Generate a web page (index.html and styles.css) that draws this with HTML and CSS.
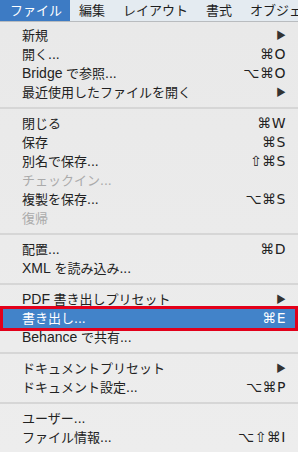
FILE: index.html
```html
<!DOCTYPE html>
<html lang="ja">
<head>
    <meta charset="UTF-8">
    <title>ファイル メニュー</title>
    <link rel="stylesheet" href="styles.css">
</head>
<body>
<div id="menubar">
    <span class="barItem active">ファイル</span>
    <span class="barItem">編集</span>
    <span class="barItem">レイアウト</span>
    <span class="barItem">書式</span>
    <span class="barItem last">オブジェクト</span>
</div>
<div id="menu">
    <div class="row"><span>新規</span><span class="arrow">▶</span></div>
    <div class="row"><span>開く<i>...</i></span><span class="key">⌘O</span></div>
    <div class="row"><span><i>Bridge</i> で参照<i>...</i></span><span class="key">⌥⌘O</span></div>
    <div class="row"><span>最近使用したファイルを開く</span><span class="arrow">▶</span></div>
    <div class="sep"></div>
    <div class="row"><span>閉じる</span><span class="key">⌘W</span></div>
    <div class="row"><span>保存</span><span class="key">⌘S</span></div>
    <div class="row"><span>別名で保存<i>...</i></span><span class="key">⇧⌘S</span></div>
    <div class="row disabled"><span>チェックイン<i>...</i></span></div>
    <div class="row"><span>複製を保存<i>...</i></span><span class="key">⌥⌘S</span></div>
    <div class="row disabled"><span>復帰</span></div>
    <div class="sep"></div>
    <div class="row"><span>配置<i>...</i></span><span class="key">⌘D</span></div>
    <div class="row"><span><i>XML</i> を読み込み<i>...</i></span></div>
    <div class="sep"></div>
    <div class="row"><span><i>PDF</i> 書き出しプリセット</span><span class="arrow">▶</span></div>
    <div class="row selected"><span>書き出し<i>...</i></span><span class="key">⌘E</span></div>
    <div class="row"><span><i>Behance</i> で共有<i>...</i></span></div>
    <div class="sep"></div>
    <div class="row"><span>ドキュメントプリセット</span><span class="arrow">▶</span></div>
    <div class="row"><span>ドキュメント設定<i>...</i></span><span class="key">⌥⌘P</span></div>
    <div class="sep"></div>
    <div class="row"><span>ユーザー<i>...</i></span></div>
    <div class="row"><span>ファイル情報<i>...</i></span><span class="key">⌥⇧⌘I</span></div>
</div>
</body>
</html>
```

FILE: styles.css
```css
body {
    margin: 0;
    padding: 0;
    width: 298px;
    height: 452px;
    overflow: hidden;
    background-color: #ebebeb;
    font-family: 'Liberation Sans', 'Noto Sans CJK JP', sans-serif;
    font-size: 13px;
    color: #222;
}

i {
    font-style: normal;
    font-size: 14px;
}

#menubar {
    height: 21px;
    display: flex;
    white-space: nowrap;
    overflow: hidden;
    background-color: #e4ebf1;
    border-bottom: 1px solid #b9bcbf;
}

.barItem {
    padding: 0 9px;
    line-height: 21px;
    color: #1e1e1e;
}

.barItem.active {
    background-color: #3d7bc4;
    color: #fff;
    padding: 0 11px 0 10px;
    width: 49px;
}

.barItem.last {
    flex: 1;
    padding-right: 0;
    overflow: hidden;
}

#menu {
    padding: 4px 0 5px 0;
    background: linear-gradient(#e9e9e9, #ededed);
}

.row {
    height: 19px;
    line-height: 19px;
    display: flex;
    justify-content: space-between;
    padding: 0 12px 0 22px;
    white-space: nowrap;
}

.row.disabled {
    color: #aaa;
}

.row.selected {
    background-color: #4283c9;
    color: #fff;
    outline: 3px solid #e2001a;
    margin: 0 3px;
    padding: 0 9px 0 19px;
}

.key {
    font-family: 'DejaVu Sans', 'Liberation Sans', sans-serif;
    font-size: 14px;
    letter-spacing: 0.5px;
}

.arrow {
    font-size: 10px;
    color: #333;
}

.sep {
    height: 12px;
    display: flex;
    align-items: center;
}

.sep::before {
    content: "";
    flex: 1;
    height: 2px;
    background-color: #d6d6d6;
}
```
